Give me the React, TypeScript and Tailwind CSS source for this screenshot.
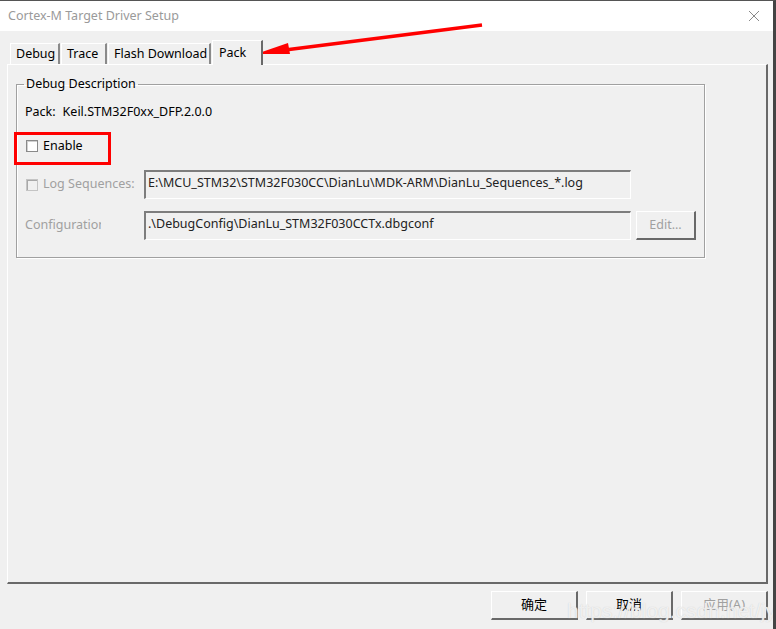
import React from "react";

const ui = { fontFamily: '"Noto Sans", "Noto Sans CJK SC", sans-serif' };

function Tab({ label, width, pl, active }: { label: string; width: number; pl: number; active?: boolean }) {
  if (active) {
    return (
      <div
        className="relative z-10 -mb-px flex h-[25px] items-start whitespace-nowrap border-l border-t border-white border-r-2 border-r-[#696969] bg-[#f0f0f0] pt-[3px] text-[12.5px] text-black"
        style={{ width, paddingLeft: pl }}
      >
        {label}
      </div>
    );
  }
  return (
    <div
      className="flex h-[21px] items-start whitespace-nowrap border-l border-t border-white border-r-2 border-r-[#8a8a8a] bg-[#f0f0f0] pt-[1px] text-[12.5px] text-black"
      style={{ width, paddingLeft: pl }}
    >
      {label}
    </div>
  );
}

function Field({ value }: { value: string }) {
  return (
    <div className="flex h-[29px] w-[487px] items-start overflow-hidden whitespace-nowrap border-l-2 border-t-2 border-l-[#7d7d7d] border-t-[#7d7d7d] border-b border-r border-white bg-[#f0f0f0] pl-[2px] pt-[2px] text-[12.5px] leading-[18px] text-[#222]">
      {value}
    </div>
  );
}

function CheckBox({ disabled }: { disabled?: boolean }) {
  return (
    <div
      className={
        disabled
          ? "h-[12px] w-[12px] border border-[#c4c4c4] bg-[#f0f0f0] shadow-[inset_1px_1px_0_#a8a8a8]"
          : "h-[12px] w-[12px] border border-[#8a8a8a] bg-white shadow-[inset_1px_1px_0_#d0d0d0]"
      }
    />
  );
}

function DlgButton({ label, disabled }: { label: string; disabled?: boolean }) {
  return (
    <div
      className={
        "flex h-[29px] w-[87px] items-center justify-center border-l border-t border-white border-b-2 border-r-2 border-b-[#696969] border-r-[#696969] bg-[#f0f0f0] text-[13px] " +
        (disabled ? "text-[#a0a0a0]" : "text-black")
      }
    >
      {label}
    </div>
  );
}

export default function App() {
  return (
    <div
      className="relative flex h-[629px] w-[776px] flex-col overflow-hidden border-r-[3px] border-t border-r-[#444] border-t-[#555] bg-[#f0f0f0]"
      style={ui}
    >
      {/* title bar */}
      <div className="flex h-[30px] items-center justify-between bg-white pl-[8px] pr-[12px]">
        <span className="text-[12.5px] text-[#9a9a9a]">Cortex-M Target Driver Setup</span>
        <svg width="12" height="12" viewBox="0 0 12 12" className="mr-[1px]">
          <path d="M1 1 L11 11 M11 1 L1 11" stroke="#8a8a8a" strokeWidth="1" />
        </svg>
      </div>

      {/* tabs */}
      <div className="ml-[10px] mt-[9px] flex items-end gap-[1px]">
        <Tab label="Debug" width={50} pl={5} />
        <Tab label="Trace" width={46} pl={5} />
        <Tab label="Flash Download" width={103} pl={5} />
        <Tab label="Pack" width={51} pl={6} active />
      </div>

      {/* tab panel */}
      <div className="ml-[7px] h-[520px] w-[761px] border-l border-t border-white border-b-2 border-r-2 border-b-[#696969] border-r-[#696969] pl-[8px] pt-[11px]">
        <fieldset className="w-[689px] border border-[#a0a0a0] pb-[17px] shadow-[1px_1px_0_#fff,inset_1px_1px_0_#fff]">
          <legend className="ml-[7px] px-[2px] text-[12.5px] leading-[16px] text-black">Debug Description</legend>
          <div className="pl-[8px]">
            <div className="mt-[12px] flex h-[16px] items-center text-[12.5px] text-black">
              <span>Pack:</span>
              <span className="ml-[7px]">Keil.STM32F0xx_DFP.2.0.0</span>
            </div>
            <div className="mt-[18px] flex h-[16px] items-center gap-[5px] pl-[1px] text-[12.5px] text-black">
              <CheckBox />
              <span>Enable</span>
            </div>
            <div className="mt-[16px] flex items-center">
              <div className="flex w-[119px] items-center gap-[5px] whitespace-nowrap pl-[1px] text-[12.5px] text-[#a0a0a0]">
                <CheckBox disabled />
                <span>Log Sequences:</span>
              </div>
              <Field value="E:\MCU_STM32\STM32F030CC\DianLu\MDK-ARM\DianLu_Sequences_*.log" />
            </div>
            <div className="mt-[12px] flex items-center">
              <div className="w-[119px] whitespace-nowrap text-[12.5px] text-[#a0a0a0]">
                <span className="block w-[76px] overflow-hidden">Configuration</span>
              </div>
              <Field value=".\DebugConfig\DianLu_STM32F030CCTx.dbgconf" />
              <div className="ml-[5px] flex h-[29px] w-[60px] items-center justify-center border-l border-t border-white border-b-2 border-r-2 border-b-[#696969] border-r-[#696969] text-[12.5px] text-[#a0a0a0]">
                Edit...
              </div>
            </div>
          </div>
        </fieldset>
      </div>

      {/* dialog buttons */}
      <div className="mr-[5px] mt-[7px] flex justify-end gap-[8px]">
        <DlgButton label="确定" />
        <DlgButton label="取消" />
        <DlgButton label="应用(A)" disabled />
      </div>

      {/* red annotation box */}
      <div className="absolute left-[14px] top-[131px] h-[33px] w-[97px] border-[3px] border-[#ff0000]" />

      {/* red arrow */}
      <svg className="pointer-events-none absolute left-0 top-0" width="776" height="629">
        <line x1="482" y1="24" x2="285" y2="49" stroke="#ff0000" strokeWidth="3.5" />
        <polygon points="256,53 288,42 290,53" fill="#ff0000" />
      </svg>

      {/* watermark */}
      <span
        className="pointer-events-none absolute left-[567px] top-[594px] text-[21px] text-white/70"
        style={{ fontFamily: '"Liberation Sans", sans-serif', textShadow: "0 0 1px #c8c8c8" }}
      >
        https://blog.csdn.net/jy0518
      </span>
    </div>
  );
}
